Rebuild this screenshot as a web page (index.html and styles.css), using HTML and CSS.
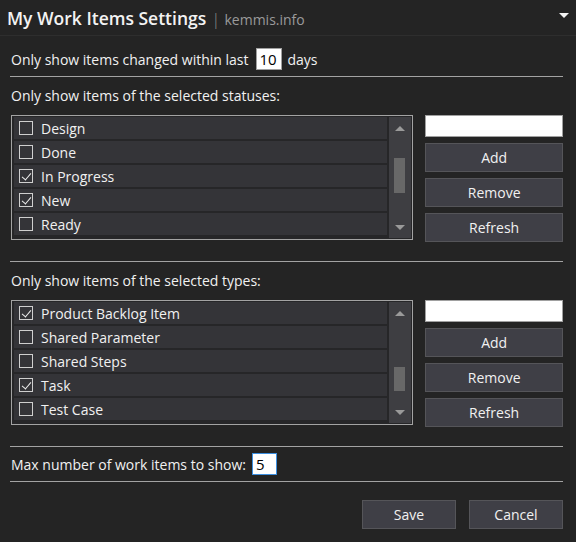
FILE: index.html
```html
<!DOCTYPE html>
<html>
<head>
<meta charset="utf-8">
<link rel="stylesheet" href="styles.css">
</head>
<body>
<div class="app">
  <header class="header">
    <div class="title"><span class="title-main">My Work Items Settings</span><span class="title-sep">|</span><span class="title-sub">kemmis.info</span></div>
    <span class="caret"></span>
  </header>
  <div class="content">
    <div class="inline-row days-row">
      <span>Only show items changed within last</span>
      <span class="num-input num-days">10</span>
      <span>days</span>
    </div>
    <div class="sep sep-days"></div>

    <div class="label">Only show items of the selected statuses:</div>
    <div class="group">
      <div class="listbox">
        <div class="rows">
          <div class="row"><span class="cb"></span><span>Design</span></div>
          <div class="row"><span class="cb"></span><span>Done</span></div>
          <div class="row"><span class="cb checked"></span><span>In Progress</span></div>
          <div class="row"><span class="cb checked"></span><span>New</span></div>
          <div class="row"><span class="cb"></span><span>Ready</span></div>
        </div>
        <div class="scrollbar">
          <span class="arrow up"></span>
          <div class="track"><div class="thumb thumb-a"></div></div>
          <span class="arrow down"></span>
        </div>
      </div>
      <div class="side">
        <div class="text-input"></div>
        <div class="btn">Add</div>
        <div class="btn">Remove</div>
        <div class="btn">Refresh</div>
      </div>
    </div>
    <div class="sep sep-group"></div>

    <div class="label">Only show items of the selected types:</div>
    <div class="group">
      <div class="listbox">
        <div class="rows">
          <div class="row"><span class="cb checked"></span><span>Product Backlog Item</span></div>
          <div class="row"><span class="cb"></span><span>Shared Parameter</span></div>
          <div class="row"><span class="cb"></span><span>Shared Steps</span></div>
          <div class="row"><span class="cb checked"></span><span>Task</span></div>
          <div class="row"><span class="cb"></span><span>Test Case</span></div>
        </div>
        <div class="scrollbar">
          <span class="arrow up"></span>
          <div class="track"><div class="thumb thumb-b"></div></div>
          <span class="arrow down"></span>
        </div>
      </div>
      <div class="side">
        <div class="text-input"></div>
        <div class="btn">Add</div>
        <div class="btn">Remove</div>
        <div class="btn">Refresh</div>
      </div>
    </div>
    <div class="sep sep-group"></div>

    <div class="inline-row max-row">
      <span>Max number of work items to show:</span>
      <span class="num-input num-max">5</span>
    </div>
    <div class="sep sep-max"></div>

    <div class="footer">
      <div class="btn footer-btn">Save</div>
      <div class="btn footer-btn">Cancel</div>
    </div>
  </div>
</div>
</body>
</html>
```

FILE: styles.css
```css
* { box-sizing: border-box; }
html, body {
  margin: 0;
  padding: 0;
  background: #242424;
}
body {
  font-family: "Open Sans", "Noto Sans", sans-serif;
  font-size: 14px;
  color: #f1f1f1;
  width: 576px;
  height: 542px;
  overflow: hidden;
}
.header {
  height: 36px;
  border-bottom: 1px solid #2e2e2e;
  display: flex;
  align-items: center;
  justify-content: space-between;
  padding: 0 7px 0 7px;
}
.title { display: flex; align-items: baseline; }
.title-main {
  font-size: 17.5px;
  font-weight: 600;
  color: #f3f3f3;
}
.title-sep {
  font-size: 17px;
  font-weight: 300;
  color: #8a8a8a;
  margin: 0 4px 0 5px;
}
.title-sub {
  font-size: 14px;
  color: #9a9a9a;
}
.caret {
  width: 0;
  height: 0;
  border-left: 5px solid transparent;
  border-right: 5px solid transparent;
  border-top: 5px solid #f3f3f3;
  margin-bottom: 4px;
}
.content {
  padding: 0 13px 0 11px;
}
.inline-row {
  display: flex;
  align-items: center;
  height: 22px;
}
.days-row { margin-top: 12px; }
.num-input {
  background: #ffffff;
  color: #000;
  border: 1px solid #a0a0a0;
  height: 22px;
  display: inline-flex;
  align-items: center;
  padding-left: 3px;
  font-size: 15px;
}
.num-days { width: 26px; margin: 0 6px 0 7px; }
.num-max {
  width: 25px;
  margin-left: 6px;
  border-color: #3c8fe0;
}
.sep {
  height: 1px;
  background: #a3a3a3;
  margin: 5px 0 0 -1px;
}
.sep-days { margin-top: 6px; }
.sep-group { margin-top: 19px; }
.label {
  margin-top: 9px;
  height: 20px;
  line-height: 20px;
}
.group {
  margin-top: 9px;
  display: flex;
  gap: 12px;
  align-items: flex-start;
}
.listbox {
  width: 403px;
  height: 125px;
  border: 1px solid #a3a3a3;
  display: flex;
  padding: 1px 1px 1px 2px;
  background: #262628;
}
.rows {
  flex: 1;
  display: flex;
  flex-direction: column;
  gap: 2px;
  margin-right: 2px;
}
.row {
  height: 22px;
  background: #343438;
  display: flex;
  align-items: center;
  padding-left: 5px;
  gap: 8px;
}
.cb {
  width: 14px;
  height: 14px;
  border: 1px solid #cfcfcf;
  position: relative;
  flex: none;
}
.cb.checked::after {
  content: "";
  position: absolute;
  left: 4px;
  top: 1px;
  width: 4px;
  height: 8px;
  border-right: 1.5px solid #f0f0f0;
  border-bottom: 1.5px solid #f0f0f0;
  transform: rotate(40deg);
}
.scrollbar {
  width: 22px;
  background: #3e3e42;
  display: flex;
  flex-direction: column;
  align-items: center;
}
.arrow {
  width: 0;
  height: 0;
  border-left: 5px solid transparent;
  border-right: 5px solid transparent;
  flex: none;
}
.arrow.up {
  border-bottom: 5px solid #9a9a9a;
  margin-top: 9px;
}
.arrow.down {
  border-top: 5px solid #9a9a9a;
  margin-bottom: 8px;
}
.track {
  flex: 1;
  width: 100%;
  position: relative;
}
.thumb {
  position: absolute;
  left: 5px;
  width: 11px;
  background: #686868;
}
.thumb-a { top: 27px; height: 35px; }
.thumb-b { top: 51px; height: 24px; }
.side {
  width: 138px;
  display: flex;
  flex-direction: column;
  gap: 6px;
}
.text-input {
  height: 22px;
  background: #ffffff;
  border: 1px solid #a0a0a0;
}
.btn {
  height: 29px;
  background: #3f3f46;
  border: 1px solid #555559;
  display: flex;
  align-items: center;
  justify-content: center;
  color: #f1f1f1;
}
.sep-max { margin-top: 6px; }
.max-row { margin-top: 6px; }
.footer {
  display: flex;
  justify-content: flex-end;
  gap: 13px;
  margin-top: 18px;
}
.footer-btn { width: 94px; }
```
